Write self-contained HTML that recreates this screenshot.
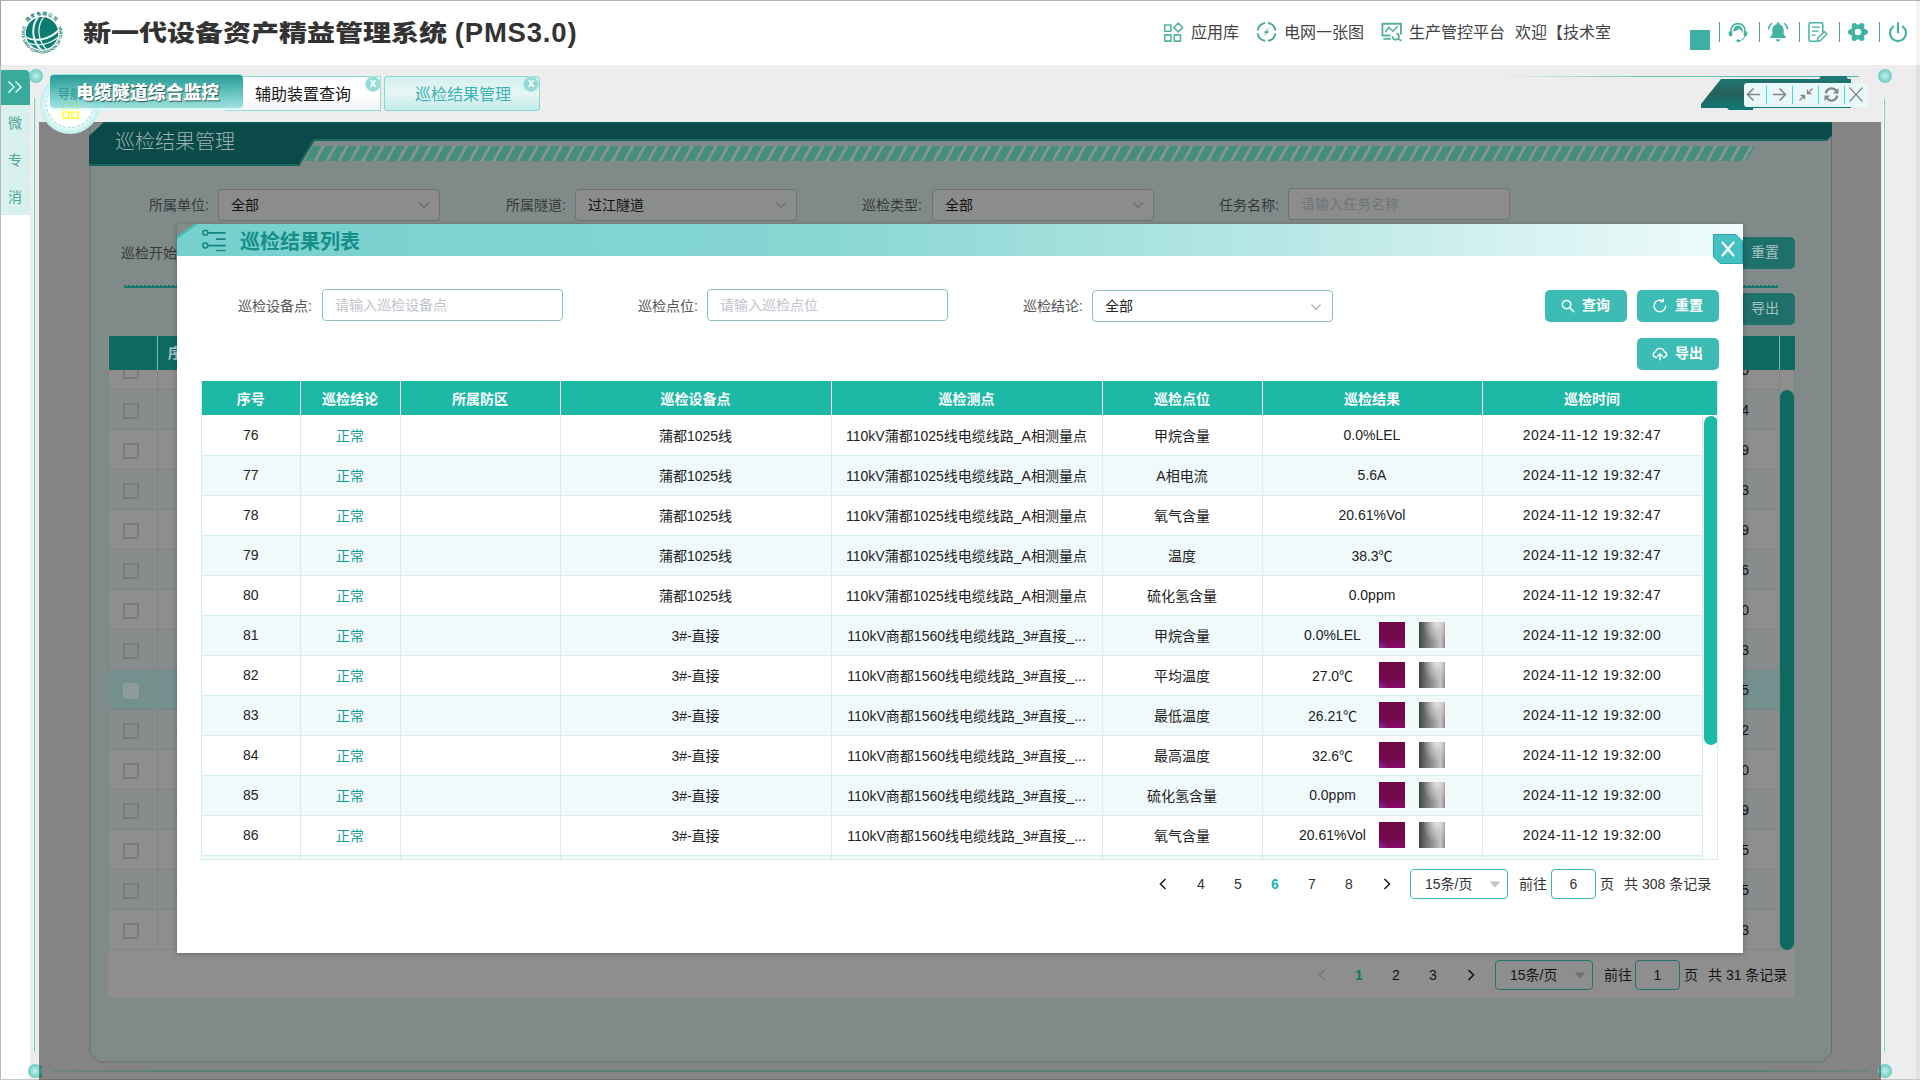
<!DOCTYPE html>
<html lang="zh-CN">
<head>
<meta charset="utf-8">
<title>新一代设备资产精益管理系统 (PMS3.0)</title>
<style>
*{box-sizing:border-box;margin:0;padding:0}
html,body{width:1920px;height:1080px;overflow:hidden;background:#ededed;font-family:"Liberation Sans","Noto Sans CJK SC",sans-serif;color:#333}
.abs{position:absolute}
#root{position:relative;width:1920px;height:1080px;overflow:hidden}
/* header */
#hdr{position:absolute;left:0;top:0;width:1920px;height:65px;background:#fff;border-top:1px solid #b5b5b5;border-left:1px solid #a0a0a0}
#title{position:absolute;left:83px;top:11px;font-size:28px;font-weight:900;letter-spacing:0;color:#333;white-space:nowrap;line-height:44px}
#title .cn{display:inline-block;transform:scaleY(.82);transform-origin:50% 56%}
#title .en{font-family:"Liberation Sans",sans-serif;font-weight:700;letter-spacing:.8px;font-size:27.5px}
.hlink{position:absolute;top:21px;font-size:16px;line-height:24px;color:#444;white-space:nowrap}
.hsep{position:absolute;top:22px;width:1px;height:20px;background:#5e9c94}
/* sidebar */
.sb{position:absolute;left:0;width:30px;font-size:14px;color:#4aa699;text-align:center;background:#d9f1ee}
/* tabs */
.tab{position:absolute;top:76px;height:35px;font-size:16px;line-height:35px;white-space:nowrap}

.ball{position:absolute;width:14px;height:14px;border-radius:50%;background:radial-gradient(circle at 50% 50%,#c5efe9 0,#8bd9cf 45%,#4cbcae 100%)}
.tabx{position:absolute;width:16px;height:16px;border-radius:50%;background:#96dad6;color:#fff;font-size:12px;line-height:12px;text-align:center;font-weight:700;border:1.5px solid #b4e8e5;font-family:"Liberation Sans",sans-serif}
/* bg page */
#page{position:absolute;left:39px;top:122px;width:1842px;height:958px;background:#f1f1f1;overflow:hidden}
#page .lbl{position:absolute;font-size:14px;line-height:32px;color:#555;white-space:nowrap}
.sel{position:absolute;height:32px;border:1px solid #b7c9c9;border-radius:4px;background:#fff;font-size:14px;line-height:30px;padding-left:12px;color:#222}
.sel svg{position:absolute;right:9px;top:9px}
.btn{position:absolute;height:32px;border-radius:5px;background:#3cbcb4;color:#fff;font-size:14px;line-height:32px;text-align:center;white-space:nowrap}
.bt{position:absolute;top:-1px;font-weight:700;letter-spacing:0}
#ov{position:absolute;left:39px;top:122px;width:1842px;height:958px;background:rgba(0,0,0,.45)}

#page{background:#848484}
#page .lbl{color:#343938}
#page .sel{border-color:#6d7473;background:#8b8c8c;color:#111}
.bbtn{position:absolute;width:82px;height:32px;border-radius:5px;background:#1f6f6b;color:#a5c3c0;font-size:14px;line-height:30px;text-align:center;white-space:nowrap}
.br{position:absolute;left:0;width:1687px;height:40px;border-bottom:1px solid #7e8584}
.cb{position:absolute;left:15px;top:13px;width:16px;height:16px;border:2px solid #777b7b;border-radius:2px;background:transparent}
.bn{position:absolute;left:45.5px;width:60px;text-align:center;font-size:14px;line-height:40px;color:#111}
.btm{position:absolute;right:46px;font-size:14px;line-height:40px;color:#111;white-space:nowrap}
.bpg{position:absolute;top:624px;font-size:14px;line-height:30px;color:#151515;white-space:nowrap}
#ov{display:none}
/* modal */
#modal{z-index:10;position:absolute;left:177px;top:224px;width:1566px;height:729px;background:#fff;box-shadow:0 1px 5px rgba(0,0,0,.28)}
#mhead{position:absolute;left:0;top:0;width:100%;height:32px;background:linear-gradient(90deg,#76d0ce 0%,#86d6d2 40%,#b6e7e5 70%,#f1fbfb 100%)}
#mtitle{position:absolute;left:63px;top:2px;font-size:20px;font-weight:700;line-height:32px;color:#158f88;white-space:nowrap}
.mlbl{position:absolute;font-size:14px;line-height:32px;color:#555;white-space:nowrap;top:66px}
.minp{position:absolute;top:65px;height:32px;width:241px;border:1px solid #8ebfc0;border-radius:4px;background:#fff;font-size:14px;line-height:31px;padding-left:12px;color:#c0c4cc;white-space:nowrap}
table{border-collapse:collapse;table-layout:fixed}
#mt{position:absolute;left:24px;top:157px;width:1517px;height:479px;overflow:hidden;border-bottom:1px solid #d4eeec;border-left:1px solid #d4eeec;border-right:1px solid #d4eeec}
#mt table{width:1500px}
#mt th{height:34px;background:#1cb9a7;color:#fff;font-size:14px;font-weight:700;border-right:1px solid #fff;text-align:center;letter-spacing:0}
#mt td{height:40px;font-size:14px;color:#222;text-align:center;border-right:1px solid #d4eeec;border-bottom:1px solid #d4eeec;white-space:nowrap;overflow:hidden;padding:0}
#mt tr:nth-child(odd) td{background:#f0fafb}
#mt td.ok{color:#1a9d95}
#mt td:last-child{letter-spacing:.5px}
.th1{display:inline-block;width:26px;height:26px;vertical-align:middle}
.tp{background:radial-gradient(circle at 4% 100%,#7a2c9a 0,rgba(125,42,156,0) 22%),linear-gradient(180deg,#6f0846 0,#740a4c 62%,#880a6c 100%);margin-left:0}
.tg{background:radial-gradient(ellipse at 70% 5%,#e2e2e0 0,rgba(210,210,208,.6) 25%,rgba(140,144,142,0) 55%),linear-gradient(90deg,#414643 0,#6f7370 28%,#8d908e 50%,#b9bbba 76%,#c2c4c3 84%,#8a8c8b 100%);margin-left:14px}
#mt td.res{text-align:left}
.rv{display:inline-block;width:116px;text-align:center;padding-left:24px;vertical-align:middle}
.pg{position:absolute;font-size:14px;line-height:30px;color:#333;white-space:nowrap}
</style>
</head>
<body>
<div id="root">

<!-- HEADER -->
<div id="hdr"></div>

<!-- LOGO -->
<svg class="abs" style="left:16px;top:7px" width="52" height="52" viewBox="0 0 52 52">
  <defs>
    <path id="lgTop" d="M8.600 21.500A18 18 0 0 1 43.400 21.500"/>
    <path id="lgBot" d="M7.18 18.70A20.3 20.3 0 1 0 44.82 18.70"/>
    <clipPath id="lgClip"><circle cx="26" cy="26.300" r="16.200"/></clipPath>
  </defs>
  <circle cx="26" cy="26.300" r="16.200" fill="#0c7c70"/>
  <g clip-path="url(#lgClip)" fill="none" stroke="#e9fbf7" stroke-linecap="round">
    <path d="M24 8C14 18 15 36 28 45" stroke-width="2"/>
    <path d="M29 8.500C20 18 21 34 32 44" stroke-width="1.300"/>
    <path d="M8 29C18 36 34 33 44 22" stroke-width="2"/>
    <path d="M9.500 34C20 41 35 38 44.500 28" stroke-width="1.300"/>
  </g>
  <text font-family="'Liberation Sans','Noto Sans CJK SC',sans-serif" font-size="4.600" font-weight="700" fill="#0c7c70" letter-spacing="0.900"><textPath href="#lgTop" startOffset="50%" text-anchor="middle">国家电网公司</textPath></text>
  <text font-family="'Liberation Sans',sans-serif" font-size="4.200" font-weight="700" fill="#0c7c70" letter-spacing="0"><textPath href="#lgBot" startOffset="50%" text-anchor="middle">STATE GRID CORPORATION OF CHINA</textPath></text>
</svg>
<div id="title"><span class="cn">新一代设备资产精益管理系统</span> <span class="en">(PMS3.0)</span></div>
<div class="hlink" style="left:1191px">应用库</div>
<div class="hlink" style="left:1284px">电网一张图</div>
<div class="hlink" style="left:1409px">生产管控平台</div>
<div class="hlink" style="left:1515px">欢迎【技术室</div>
<div class="abs" style="left:1690px;top:30px;width:20px;height:20px;background:#3eb0a1"></div>
<div class="hsep" style="left:1719px"></div>
<div class="hsep" style="left:1759px"></div>
<div class="hsep" style="left:1799px"></div>
<div class="hsep" style="left:1839px"></div>
<div class="hsep" style="left:1879px"></div>


<!-- HEADER ICONS -->
<svg class="abs" style="left:1163px;top:22px" width="22" height="21" viewBox="0 0 22 21" fill="none" stroke="#55b29c" stroke-width="1.600" stroke-linejoin="round">
  <rect x="1.700" y="3.000" width="6.200" height="6.200"/><rect x="1.700" y="12.900" width="6.200" height="6.200"/><rect x="11.300" y="12.900" width="6.200" height="6.200"/>
  <path d="M15.300 1.100L19.700 5.500L15.300 9.900L10.900 5.500Z"/>
</svg>
<svg class="abs" style="left:1255px;top:21px" width="23" height="22" viewBox="0 0 23 22" fill="none" stroke="#52a895" stroke-width="1.900">
  <path d="M20.39 12.31A9 9 0 0 1 12.91 19.79 M10.09 19.79A9 9 0 0 1 2.61 12.31 M2.61 9.49A9 9 0 0 1 10.09 2.01 M12.91 2.01A9 9 0 0 1 20.39 9.49"/>
  <path d="M14.800 6.200L8.600 11.600L11.300 11.900L8.000 16.000L14.400 10.600L11.700 10.200Z" fill="#52a895" stroke="none"/>
</svg>
<svg class="abs" style="left:1380px;top:22px" width="24" height="21" viewBox="0 0 24 21" fill="none" stroke="#55b29c" stroke-width="1.900" stroke-linejoin="round">
  <path d="M10.500 13.500H2.400V1.800H21V12.400"/><path d="M5.400 10.300L9 5.300L13 9.300L17.600 4.200" stroke-width="1.500"/>
  <path d="M3.400 16.800H10.900"/><path d="M16.530 11.310A3.200 3.200 0 1 1 12.510 14.120" stroke-width="1.700"/><path d="M18.200 16.800L21.500 18.700" stroke-width="1.700"/>
</svg>
<!-- headset -->
<svg class="abs" style="left:1727px;top:21px" width="22" height="22" viewBox="0 0 22 22">
  <g fill="#41b3a3"><path d="M3.200 10.200C3.200 4.800 6.600 1.800 11 1.800C15.400 1.800 18.800 4.800 18.800 10.200C19.900 10.400 20.500 11.300 20.500 12.600C20.500 14.200 19.600 15.200 18.300 15.200C17.600 17.500 15.800 19.300 13.600 19.800C13.400 20.500 12.800 20.900 12 20.900H10.800C10 20.900 9.400 20.400 9.400 19.700C9.400 19 10 18.500 10.800 18.500H12C12.600 18.500 13.100 18.800 13.400 19.200C15.200 18.700 16.700 17.100 17.300 15.100C16.900 15 16.700 14.700 16.700 14.300V10.600C16.700 10.200 16.900 9.900 17.300 9.800C17.100 6 14.600 3.400 11 3.400C7.400 3.400 4.900 6 4.700 9.800C5.100 9.900 5.300 10.200 5.300 10.600V14.300C5.300 14.800 5 15.200 4.500 15.200H3.700C2.400 15.200 1.500 14.200 1.500 12.600C1.500 11.300 2.100 10.400 3.200 10.200Z"/>
  <path d="M6.300 10.500C6.300 6.800 8.200 4.600 11 4.600C13.800 4.600 15.700 6.800 15.700 10.500C15.700 11 15.600 11.500 15.500 12C14.800 10 13.500 8.600 12 7.800C10.800 9.200 8.800 10.200 6.400 10.500Z"/></g>
</svg>
<!-- bell -->
<svg class="abs" style="left:1766px;top:21px" width="24" height="22" viewBox="0 0 24 22">
  <path d="M12 1.300C12.800 1.300 13.400 1.900 13.400 2.700V3.200C16 3.800 17.700 6.200 17.700 9.200V13.200L19.800 16V17H4.200V16L6.300 13.200V9.200C6.300 6.200 8 3.800 10.600 3.200V2.700C10.600 1.900 11.200 1.300 12 1.300ZM9.800 18.300H14.200C14.200 19.600 13.200 20.500 12 20.500C10.800 20.500 9.800 19.600 9.800 18.300Z" fill="#41b3a3"/>
  <path d="M5.600 2.500C4 3.800 2.900 5.600 2.500 7.800M18.400 2.500C20 3.800 21.100 5.600 21.500 7.800" fill="none" stroke="#41b3a3" stroke-width="1.500" stroke-linecap="round"/>
</svg>
<!-- edit doc -->
<svg class="abs" style="left:1807px;top:21px" width="22" height="22" viewBox="0 0 22 22" fill="none" stroke="#41b3a3" stroke-width="1.500" stroke-linecap="round" stroke-linejoin="round">
  <path d="M9 20.200H3.500C2.700 20.200 2 19.500 2 18.700V3.300C2 2.500 2.700 1.800 3.500 1.800H14.300C15.100 1.800 15.800 2.500 15.800 3.300V10.500"/>
  <path d="M5.200 6.200H12.600M5.200 10.200H11M5.200 14.200H8.200" stroke-width="1.300"/>
  <path d="M17.400 10.600L19.900 13.100L13.200 19.800L10.200 20.300L10.700 17.300Z" stroke-width="1.400"/>
</svg>
<!-- gear -->
<svg class="abs" style="left:1848px;top:22px" width="20" height="20" viewBox="0 0 20 20">
  <g fill="#41b3a3"><circle cx="10" cy="10" r="7.400"/><circle cx="17.30" cy="10.00" r="2.7"/><circle cx="13.65" cy="16.32" r="2.7"/><circle cx="6.35" cy="16.32" r="2.7"/><circle cx="2.70" cy="10.00" r="2.7"/><circle cx="6.35" cy="3.68" r="2.7"/><circle cx="13.65" cy="3.68" r="2.7"/></g><circle cx="10" cy="10" r="3.200" fill="#fff"/>
</svg>
<!-- power -->
<svg class="abs" style="left:1887px;top:21px" width="22" height="22" viewBox="0 0 22 22" fill="none" stroke="#41b3a3" stroke-width="2.100" stroke-linecap="round">
  <path d="M6.200 5.700A8 8 0 1 0 15.800 5.700"/><path d="M11 2V11.500"/>
</svg>

<div class="abs" style="left:1916px;top:0;width:4px;height:1080px;background:rgba(0,0,0,.045);z-index:20"></div>
<div class="abs" style="left:0;top:1079px;width:1920px;height:1px;background:linear-gradient(90deg,#c6c6c6 0,#c6c6c6 39px,#6e6e6e 39px,#6e6e6e 1881px,#c6c6c6 1881px);z-index:20"></div>
<!-- SIDEBAR -->
<div class="abs" style="left:0;top:65px;width:1px;height:1015px;background:#b9b9b9;z-index:6"></div>
<div class="abs" style="left:0;top:215px;width:30px;height:865px;background:#fff"></div>
<div class="sb" style="top:70px;height:35px;background:#3aab9b;border-top-right-radius:5px;color:#d9fffa"></div>
<div class="sb" style="top:105px;height:36px;line-height:36px">微</div>
<div class="sb" style="top:142px;height:36px;line-height:36px">专</div>
<div class="sb" style="top:179px;height:36px;line-height:36px">消</div>
<!-- sidebar arrow -->
<svg class="abs" style="left:7px;top:80px" width="16" height="14" viewBox="0 0 16 14" fill="none" stroke="#c9fff6" stroke-width="1.600"><path d="M1.500 1.500L7 7L1.500 12.500M8.500 1.500L14 7L8.500 12.500"/></svg>


<div class="abs" style="left:0;top:0;z-index:5">
<!-- FRAME LINES + CIRCLES -->
<div class="abs" style="left:33px;top:98px;width:3px;height:954px;background:linear-gradient(90deg,#fff 0,#fff 1px,#6fcbbb 1px,#6fcbbb 2px,#d8f3ee 2px)"></div>
<div class="abs" style="left:1883px;top:98px;width:3px;height:954px;background:linear-gradient(90deg,#fff 0,#fff 1.5px,#74d0c0 1.5px,#74d0c0 2.5px,#e6f5f2 2.5px)"></div>
<div class="abs" style="left:53px;top:1070px;width:1815px;height:2px;background:linear-gradient(90deg,rgba(86,127,121,.4),#567f79 8%,#567f79 92%,rgba(86,127,121,.4))"></div>
<div class="ball" style="left:29px;top:69px"></div>
<div class="ball" style="left:1878px;top:69px"></div>
<div class="ball" style="left:28px;top:1064px"></div><div class="abs" style="left:39px;top:1065px;width:3px;height:13px;border-radius:0 7px 7px 0;background:rgba(0,60,55,.45)"></div>
<div class="ball" style="left:1878px;top:1064px"></div><div class="abs" style="left:1879px;top:1066px;width:2px;height:11px;border-radius:7px 0 0 7px;background:rgba(0,60,55,.45)"></div>
<div class="abs" style="left:1500px;top:76px;width:359px;height:1px;background:linear-gradient(90deg,rgba(110,200,190,0),#6cc5ba 40%,#4fb3a8)"></div>

<!-- NAV CIRCLE -->
<div class="abs" style="left:40px;top:74px;width:60px;height:60px;border-radius:50%;background:radial-gradient(circle,#ffffff 0,#ffffff 52%,#d9f6f4 60%,#bff0ee 70%,#e6f9f8 80%,#c9f2ef 92%,rgba(200,240,238,.4) 100%)"></div>
<div class="abs" style="left:46px;top:80px;width:48px;height:48px;border-radius:50%;border:1.5px dashed #9fd6dc"></div>
<svg class="abs" style="left:62px;top:102px" width="17" height="17" viewBox="0 0 17 17" fill="none" stroke="#ffff3a" stroke-width="1.6"><rect x="1" y="1" width="6" height="6"/><rect x="10" y="1" width="6" height="6"/><rect x="1" y="10" width="6" height="6"/><rect x="10" y="10" width="6" height="6"/></svg>

<!-- TABS -->
<div class="abs" style="left:48px;top:74px;width:492px;height:37px;border-top:1px solid rgba(150,235,228,.0)"></div>
<div class="tab" style="left:225px;width:156px;background:linear-gradient(180deg,#ffffff 0,#ffffff 55%,#f1f5f5 100%);border:1px solid #8fdcd8;border-left:none;color:#1a1a1a;padding-left:30px">辅助装置查询</div>
<div class="tab" style="left:384px;width:156px;background:linear-gradient(180deg,#d4f1ef 0,#e6f6f5 50%,#c2ebe8 100%);border:1px solid #86dbd6;border-radius:3px;color:#3ab3b3;padding-left:30px">巡检结果管理</div>
<div class="tabx" style="left:365px;top:76px">x</div>
<div class="tabx" style="left:523px;top:76px">x</div>
<div class="abs" style="left:50px;top:75px;width:193px;height:33px;border-radius:4px;background:linear-gradient(180deg,rgba(38,150,144,.97) 0,rgba(58,170,165,.92) 30%,rgba(98,198,194,.85) 70%,rgba(132,219,215,.75) 100%);box-shadow:0 -1px 0 #8fe9e2,0 2px 2px rgba(215,250,248,.9)"></div>
<div class="abs" style="left:58px;top:87px;font-size:12px;line-height:16px;color:#258f88;white-space:nowrap;opacity:.95">导航</div>
<div class="abs" style="left:76px;top:80px;font-size:18px;font-weight:900;line-height:26px;color:#fff;white-space:nowrap;letter-spacing:-0.1px;text-shadow:1px 1px 1px rgba(0,40,40,.7)">电缆隧道综合监控</div>

<!-- TOOLBAR -->
<svg class="abs" style="left:1698px;top:74px" width="172" height="40" viewBox="0 0 172 40">
  <defs><linearGradient id="tg1" x1="0" y1="0" x2="0" y2="1"><stop offset="0" stop-color="#1a7c77"/><stop offset=".5" stop-color="#27605d"/><stop offset="1" stop-color="#0d7a74"/></linearGradient></defs>
  <polygon points="123,2 148,2 150,5 153,5 153,34 55,34 55,36 31,36 29,34 3,34 3,30 23,5 121,5" fill="url(#tg1)"/>
  <rect x="46" y="9" width="123.5" height="24" rx="3" fill="#e9f8f8"/>
  <g stroke="#3fe0d8" stroke-width="1"><path d="M68.5 11.5V30M94.5 11.5V30M120.5 11.5V30M146.5 11.5V30"/></g>
  <g fill="none" stroke="#858585" stroke-width="1.5" stroke-linecap="butt">
    <path d="M62 20.5H50M55.5 14.5L49.5 20.5L55.5 26.5"/>
    <path d="M75 20.5H87M81.500 14.500L87.500 20.500L81.500 26.500"/>
    <path d="M101.500 26.500L106.500 21.500M102.500 21.500H106.500V25.500M114.500 14.500L109.500 19.500M113.500 19.500H109.500V15.500" stroke-width="1.3"/>
    <path d="M151.500 13.500L164.500 27.500M164.500 13.500L151.500 27.500" stroke-width="1.3"/>
  </g>
  <g fill="none" stroke="#858585" stroke-width="2.2"><path d="M127.800 19.500A5.800 5.800 0 0 1 138.200 16.800"/><path d="M139.200 21.500A5.800 5.800 0 0 1 128.800 24.200"/></g>
  <path d="M140.500 14V19.500H135Z M126.500 27V21.500H132Z" fill="#858585"/>
</svg>
</div>
<!-- BG PAGE -->
<div id="page">
  <!-- panel -->
  <svg class="abs" style="left:50px;top:0" width="1744" height="942" viewBox="0 0 1744 942">
    <polygon points="1,0 1742.5,0 1742.5,931 1733,940 10,940 1,931" fill="#808a88" stroke="#66716f" stroke-width="1"/>
    <!-- dark bar + title block -->
    <polygon points="0,14 15,0 1743,0 1743,13 1738,18 224,18 209,43.5 0,43.5" fill="#0a4a48"/>
    <polygon points="0,42 210,42 224.5,17 1738.5,17 1743,12.5 1743,13.5 1738,19 225.5,19 210.5,44 0,44" fill="#12695f"/>
    <rect x="15" y="0" width="1728" height="1.5" fill="#0e5a53"/>
  </svg>
  <div class="abs" style="left:76px;top:5px;font-size:20px;line-height:30px;font-weight:300;color:#9db3b0;white-space:nowrap">巡检结果管理</div>
  <div class="abs" style="left:270px;top:24px;width:1442px;height:15px;transform:skewX(-29deg);background:repeating-linear-gradient(90deg,#468e7c 0,#468e7c 8.600px,rgba(150,172,168,.3) 8.600px,rgba(150,172,168,.3) 11.900px)"></div>

  <!-- form -->
  <div class="lbl" style="left:110px;top:67px">所属单位:</div>
  <div class="sel" style="left:179px;top:67px;width:222px">全部<svg width="12" height="12" viewBox="0 0 12 12"><path d="M1 3.5L6 8.5L11 3.5" fill="none" stroke="#6a6d70" stroke-width="1.1"/></svg></div>
  <div class="lbl" style="left:467px;top:67px">所属隧道:</div>
  <div class="sel" style="left:536px;top:67px;width:222px">过江隧道<svg width="12" height="12" viewBox="0 0 12 12"><path d="M1 3.5L6 8.5L11 3.5" fill="none" stroke="#6a6d70" stroke-width="1.1"/></svg></div>
  <div class="lbl" style="left:823px;top:67px">巡检类型:</div>
  <div class="sel" style="left:893px;top:67px;width:222px">全部<svg width="12" height="12" viewBox="0 0 12 12"><path d="M1 3.5L6 8.5L11 3.5" fill="none" stroke="#6a6d70" stroke-width="1.1"/></svg></div>
  <div class="lbl" style="left:1180px;top:67px">任务名称:</div>
  <div class="sel" style="left:1249px;top:66px;width:222px;color:#70747a">请输入任务名称</div>
  <div class="lbl" style="left:82px;top:115px">巡检开始时间:</div>
  <div class="abs" style="left:85px;top:163px;width:1654px;height:1px;background:repeating-linear-gradient(90deg,#17786f 0,#17786f 2px,transparent 2px,transparent 4px)"></div>
  <div class="abs" style="left:85px;top:164px;width:1654px;height:2px;background:#17786f"></div>
  <div class="bbtn" style="left:1582px;top:115px">查询</div>
  <div class="bbtn" style="left:1674px;top:115px"><span class="abs" style="left:38px;top:0">重置</span></div>
  <div class="bbtn" style="left:1674px;top:171px"><span class="abs" style="left:38px;top:0">导出</span></div>

  <!-- bg table -->
  <div class="abs" style="left:69px;top:214px;width:1687px;height:662px;background:#8e8e8e;overflow:hidden">
    <div class="abs" style="left:1px;top:0;width:1686px;height:34px;background:#0f6b62"></div>
    <div class="abs" style="left:49px;top:0;width:1px;height:34px;background:#7fb3ad"></div>
    <div class="abs" style="left:1671px;top:0;width:1px;height:34px;background:#7fb3ad"></div>
    <div class="abs" style="left:60px;top:0;font-size:14px;line-height:34px;font-weight:700;color:#a9c9c5;white-space:nowrap">序号</div>
    <div class="abs" style="left:0;top:34px;width:1687px;height:580px;overflow:hidden">
      <div class="br" style="top:-20px;background:#8e8e8e"><i class="cb"></i><span class="bn">1</span><span class="btm">2024-11-12 19:30:00</span></div><div class="br" style="top:20px;background:#878d8c"><i class="cb"></i><span class="bn">2</span><span class="btm">2024-11-12 19:33:14</span></div><div class="br" style="top:60px;background:#8e8e8e"><i class="cb"></i><span class="bn">3</span><span class="btm">2024-11-12 19:30:29</span></div><div class="br" style="top:100px;background:#878d8c"><i class="cb"></i><span class="bn">4</span><span class="btm">2024-11-12 19:33:33</span></div><div class="br" style="top:140px;background:#8e8e8e"><i class="cb"></i><span class="bn">5</span><span class="btm">2024-11-12 19:30:49</span></div><div class="br" style="top:180px;background:#878d8c"><i class="cb"></i><span class="bn">6</span><span class="btm">2024-11-12 19:33:56</span></div><div class="br" style="top:220px;background:#8e8e8e"><i class="cb"></i><span class="bn">7</span><span class="btm">2024-11-12 19:30:00</span></div><div class="br" style="top:260px;background:#878d8c"><i class="cb"></i><span class="bn">8</span><span class="btm">2024-11-12 19:33:13</span></div><div class="br" style="top:300px;background:#74908e"><i class="cb" style="border-color:#8a9c9b;background:#8f9b9a"></i><span class="bn">9</span><span class="btm">2024-11-12 19:30:25</span></div><div class="br" style="top:340px;background:#878d8c"><i class="cb"></i><span class="bn">10</span><span class="btm">2024-11-12 19:33:32</span></div><div class="br" style="top:380px;background:#8e8e8e"><i class="cb"></i><span class="bn">11</span><span class="btm">2024-11-12 19:30:40</span></div><div class="br" style="top:420px;background:#878d8c"><i class="cb"></i><span class="bn">12</span><span class="btm">2024-11-12 19:33:59</span></div><div class="br" style="top:460px;background:#8e8e8e"><i class="cb"></i><span class="bn">13</span><span class="btm">2024-11-12 19:30:05</span></div><div class="br" style="top:500px;background:#878d8c"><i class="cb"></i><span class="bn">14</span><span class="btm">2024-11-12 19:33:15</span></div><div class="br" style="top:540px;background:#8e8e8e"><i class="cb"></i><span class="bn">15</span><span class="btm">2024-11-12 19:30:23</span></div>
      <div class="abs" style="left:0;top:0;width:1px;height:580px;background:#7e8584"></div>
      <div class="abs" style="left:49px;top:0;width:1px;height:580px;background:#7e8584"></div>
      <div class="abs" style="left:1671px;top:0;width:16px;height:580px;background:#8e8e8e;border-left:1px solid #7e8584;border-right:1px solid #7e8584"></div>
      <div class="abs" style="left:1672px;top:20px;width:14px;height:560px;border-radius:7px;background:#0f6b62"></div>
    </div>
    <!-- pagination -->
    <div class="bpg" style="left:1245px;width:12px;text-align:center;color:#14766f;font-weight:700">1</div>
    <div class="bpg" style="left:1282px;width:12px;text-align:center">2</div>
    <div class="bpg" style="left:1319px;width:12px;text-align:center">3</div>
    <svg class="abs" style="left:1208px;top:633px" width="12" height="12" viewBox="0 0 12 12"><path d="M8.5 1L3.5 6L8.5 11" fill="none" stroke="#777b7a" stroke-width="1.6"/></svg>
    <svg class="abs" style="left:1357px;top:633px" width="12" height="12" viewBox="0 0 12 12"><path d="M3.5 1L8.5 6L3.5 11" fill="none" stroke="#141414" stroke-width="1.6"/></svg>
    <div class="bpg" style="left:1387px;width:98px;height:30px;border:1px solid #256f6c;border-radius:4px;padding-left:14px;line-height:28px">15条/页<svg class="abs" style="right:6px;top:11px" width="12" height="7" viewBox="0 0 12 7"><path d="M0.5 0.5H11.5L6 6.5Z" fill="#6f7274"/></svg></div>
    <div class="bpg" style="left:1496px">前往</div>
    <div class="bpg" style="left:1527px;width:45px;height:30px;border:1px solid #256f6c;border-radius:4px;text-align:center;line-height:28px">1</div>
    <div class="bpg" style="left:1576px">页</div>
    <div class="bpg" style="left:1600px">共 31 条记录</div>
  </div>
</div>

<div id="ov"></div>

<!-- MODAL -->
<div id="modal">
  <div id="mhead"></div>
  <svg class="abs" style="left:0;top:0" width="20" height="14" viewBox="0 0 20 14"><polygon points="0,0 17.5,0 0,12.5" fill="#838b8a"/><polygon points="0,12.5 17.5,0 21,0 0,15.2" fill="#3fbfb0"/></svg>
  <svg class="abs" style="left:23px;top:3px" width="30" height="26" viewBox="0 0 30 26" fill="none" stroke="#14867f" stroke-linecap="butt">
    <circle cx="5.3" cy="5.7" r="2.5" stroke-width="1.5"/><circle cx="5.3" cy="18.5" r="2.5" stroke-width="1.5"/>
    <path d="M8 5.8H25.6M8 18.6H25.6M16.2 12.1H25.6" stroke-width="1.8"/><path d="M16.2 23.5H25.6" stroke-width="1.2"/>
  </svg>
  <div id="mtitle">巡检结果列表</div>
  <!-- close -->
  <svg class="abs" style="left:1536px;top:10px" width="30" height="30" viewBox="0 0 30 30">
    <polygon points="0.5,0.5 23,0.5 29.5,7 29.5,29.5 7,29.5 0.5,23" fill="#45c1c4" stroke="#2aa9ac" stroke-width="1"/>
    <path d="M9.5 8.5L20.5 21.5M20.5 8.5L9.5 21.5" stroke="#fff" stroke-width="2.2" stroke-linecap="round"/>
  </svg>

  <div class="mlbl" style="left:61px">巡检设备点:</div>
  <div class="minp" style="left:145px">请输入巡检设备点</div>
  <div class="mlbl" style="left:461px">巡检点位:</div>
  <div class="minp" style="left:530px">请输入巡检点位</div>
  <div class="mlbl" style="left:846px">巡检结论:</div>
  <div class="minp" style="left:915px;top:66px;color:#222">全部<svg class="abs" style="right:10px;top:10px" width="12" height="12" viewBox="0 0 12 12"><path d="M1.5 3.5L6 8.5L10.5 3.5" fill="none" stroke="#b0b4bb" stroke-width="1.2"/></svg></div>

  <div class="btn" style="left:1368px;top:66px;width:82px"><svg class="abs" style="left:16px;top:9px" width="14" height="14" viewBox="0 0 14 14" fill="none" stroke="#fff" stroke-width="1.5"><circle cx="5.6" cy="5.6" r="4.2"/><path d="M8.8 8.8L12.8 12.8" stroke-linecap="round"/></svg><span class="bt" style="left:37px">查询</span></div>
  <div class="btn" style="left:1460px;top:66px;width:82px"><svg class="abs" style="left:15px;top:8px" width="16" height="16" viewBox="0 0 16 16" fill="none" stroke="#fff" stroke-width="1.4" stroke-linecap="round"><path d="M13.6 8A5.8 5.8 0 1 1 11.2 3.3"/><path d="M11.4 0.9L11.5 3.5L8.9 3.8" stroke-width="1.2"/></svg><span class="bt" style="left:38px">重置</span></div>
  <div class="btn" style="left:1460px;top:114px;width:82px"><svg class="abs" style="left:15px;top:9px" width="16" height="14" viewBox="0 0 16 14" fill="none" stroke="#fff" stroke-width="1.4" stroke-linecap="round" stroke-linejoin="round"><path d="M4.6 10.5H4A3 3 0 0 1 3.6 4.6A4.5 4.5 0 0 1 12.3 4.8A2.9 2.9 0 0 1 12 10.5H11.4"/><path d="M8 12.8V7M5.8 9L8 6.8L10.2 9"/></svg><span class="bt" style="left:38px">导出</span></div>

  <div id="mt">
  <table>
    <colgroup><col style="width:98px"><col style="width:100px"><col style="width:160px"><col style="width:271px"><col style="width:271px"><col style="width:160px"><col style="width:220px"><col style="width:220px"></colgroup>
    <tr><th>序号</th><th>巡检结论</th><th>所属防区</th><th>巡检设备点</th><th>巡检测点</th><th>巡检点位</th><th>巡检结果</th><th>巡检时间</th></tr>
    <tr><td>76</td><td class="ok">正常</td><td></td><td>蒲都1025线</td><td>110kV蒲都1025线电缆线路_A相测量点</td><td>甲烷含量</td><td>0.0%LEL</td><td>2024-11-12 19:32:47</td></tr>
    <tr><td>77</td><td class="ok">正常</td><td></td><td>蒲都1025线</td><td>110kV蒲都1025线电缆线路_A相测量点</td><td>A相电流</td><td>5.6A</td><td>2024-11-12 19:32:47</td></tr>
    <tr><td>78</td><td class="ok">正常</td><td></td><td>蒲都1025线</td><td>110kV蒲都1025线电缆线路_A相测量点</td><td>氧气含量</td><td>20.61%Vol</td><td>2024-11-12 19:32:47</td></tr>
    <tr><td>79</td><td class="ok">正常</td><td></td><td>蒲都1025线</td><td>110kV蒲都1025线电缆线路_A相测量点</td><td>温度</td><td>38.3℃</td><td>2024-11-12 19:32:47</td></tr>
    <tr><td>80</td><td class="ok">正常</td><td></td><td>蒲都1025线</td><td>110kV蒲都1025线电缆线路_A相测量点</td><td>硫化氢含量</td><td>0.0ppm</td><td>2024-11-12 19:32:47</td></tr>
    <tr><td>81</td><td class="ok">正常</td><td></td><td>3#-直接</td><td>110kV商都1560线电缆线路_3#直接_...</td><td>甲烷含量</td><td class="res"><span class="rv">0.0%LEL</span><i class="th1 tp"></i><i class="th1 tg"></i></td><td>2024-11-12 19:32:00</td></tr>
    <tr><td>82</td><td class="ok">正常</td><td></td><td>3#-直接</td><td>110kV商都1560线电缆线路_3#直接_...</td><td>平均温度</td><td class="res"><span class="rv">27.0℃</span><i class="th1 tp"></i><i class="th1 tg"></i></td><td>2024-11-12 19:32:00</td></tr>
    <tr><td>83</td><td class="ok">正常</td><td></td><td>3#-直接</td><td>110kV商都1560线电缆线路_3#直接_...</td><td>最低温度</td><td class="res"><span class="rv">26.21℃</span><i class="th1 tp"></i><i class="th1 tg"></i></td><td>2024-11-12 19:32:00</td></tr>
    <tr><td>84</td><td class="ok">正常</td><td></td><td>3#-直接</td><td>110kV商都1560线电缆线路_3#直接_...</td><td>最高温度</td><td class="res"><span class="rv">32.6℃</span><i class="th1 tp"></i><i class="th1 tg"></i></td><td>2024-11-12 19:32:00</td></tr>
    <tr><td>85</td><td class="ok">正常</td><td></td><td>3#-直接</td><td>110kV商都1560线电缆线路_3#直接_...</td><td>硫化氢含量</td><td class="res"><span class="rv">0.0ppm</span><i class="th1 tp"></i><i class="th1 tg"></i></td><td>2024-11-12 19:32:00</td></tr>
    <tr><td>86</td><td class="ok">正常</td><td></td><td>3#-直接</td><td>110kV商都1560线电缆线路_3#直接_...</td><td>氧气含量</td><td class="res"><span class="rv">20.61%Vol</span><i class="th1 tp"></i><i class="th1 tg"></i></td><td>2024-11-12 19:32:00</td></tr>
    <tr><td>87</td><td class="ok">正常</td><td></td><td>3#-直接</td><td>110kV商都1560线电缆线路_3#直接_...</td><td>A相电流</td><td class="res"><span class="rv">5.6A</span><i class="th1 tp"></i><i class="th1 tg"></i></td><td>2024-11-12 19:32:00</td></tr>
  </table>
  <div class="abs" style="left:1500px;top:0;width:16px;height:34px;background:#1cb9a7"></div>
  <div class="abs" style="left:1502px;top:35px;width:14px;height:329px;border-radius:7px;background:#1cb9a7"></div>
  </div>

  <div class="pg" style="left:1233px;top:645px;width:98px;height:30px;border:1px solid #3cb8b4;border-radius:4px;padding-left:14px;line-height:28px">15条/页<svg class="abs" style="right:6px;top:11px" width="12" height="7" viewBox="0 0 12 7"><path d="M0.5 0.5H11.5L6 6.5Z" fill="#c0c4cc"/></svg></div>
  <div class="pg" style="left:1342px;top:645px">前往</div>
  <div class="pg" style="left:1374px;top:645px;width:45px;height:30px;border:1px solid #3cb8b4;border-radius:4px;text-align:center;line-height:28px">6</div>
  <div class="pg" style="left:1423px;top:645px">页</div>
  <div class="pg" style="left:1447px;top:645px">共 308 条记录</div>
  <div class="pg" style="left:1018px;top:645px;width:12px;text-align:center">4</div>
  <div class="pg" style="left:1055px;top:645px;width:12px;text-align:center">5</div>
  <div class="pg" style="left:1092px;top:645px;width:12px;text-align:center;color:#1fb5b8;font-weight:700">6</div>
  <div class="pg" style="left:1129px;top:645px;width:12px;text-align:center">7</div>
  <div class="pg" style="left:1166px;top:645px;width:12px;text-align:center">8</div>
  <svg class="abs" style="left:980px;top:654px" width="12" height="12" viewBox="0 0 12 12"><path d="M8.5 1L3.5 6L8.5 11" fill="none" stroke="#222" stroke-width="1.6"/></svg>
  <svg class="abs" style="left:1204px;top:654px" width="12" height="12" viewBox="0 0 12 12"><path d="M3.5 1L8.5 6L3.5 11" fill="none" stroke="#222" stroke-width="1.6"/></svg>
</div>

</div>
</body>
</html>
